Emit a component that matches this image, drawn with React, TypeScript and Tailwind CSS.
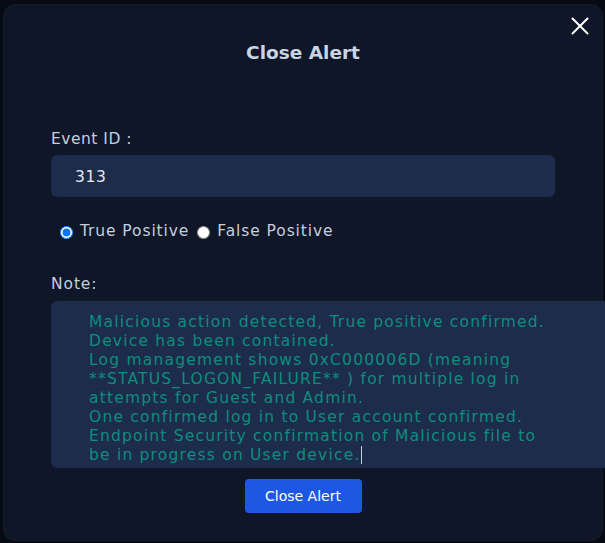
import { X } from 'lucide-react';

const noteLines = [
  'Malicious action detected, True positive confirmed.',
  'Device has been contained.',
  'Log management shows 0xC000006D (meaning',
  '**STATUS_LOGON_FAILURE** ) for multiple log in',
  'attempts for Guest and Admin.',
  'One confirmed log in to User account confirmed.',
  'Endpoint Security confirmation of Malicious file to',
  'be in progress on User device.',
];

const App = () => {
  return (
    <div className="w-[605px] h-[543px] overflow-hidden bg-[#060a13] pt-[4px] pl-[3px] font-['DejaVu_Sans',sans-serif]">
      <div className="relative w-[600px] h-[537px] rounded-[12px] bg-[#0e1627] border border-[#131c2e]">
        {/* close button */}
        <button className="absolute right-[7px] top-[6px] text-white">
          <X className="w-[30px] h-[30px]" strokeWidth={1.6} />
        </button>

        <h2 className="mt-[36px] text-center text-[18.5px] leading-[24px] font-bold text-[#c8d4e2]">Close Alert</h2>

        <div className="px-[47px] mt-[64px]">
          <label className="block text-[15.5px] leading-[20px] tracking-[0.5px] text-[#c3cfdd]">Event ID :</label>
          <div className="mt-[6px] w-[504px] h-[42px] rounded-[6px] bg-[#1c2c4a] flex items-center pl-[24px] pt-[3px] text-[15.5px] tracking-[0.6px] text-[#e2e8f0]">
            313
          </div>

          <div className="mt-[25px] ml-[9px] flex items-center h-[20px] text-[15.5px] tracking-[0.9px] text-[#c3cfdd]">
            <input type="radio" name="verdict" defaultChecked className="w-[13px] h-[13px] m-0" />
            <span className="ml-[7px]">True Positive</span>
            <input type="radio" name="verdict" className="ml-[8px] w-[13px] h-[13px] m-0" />
            <span className="ml-[7px]">False Positive</span>
          </div>

          <label className="block mt-[32px] text-[15.5px] leading-[20px] tracking-[0.9px] text-[#c3cfdd]">Note:</label>
          <div className="mt-[7px] w-[560px] h-[167px] rounded-l-[6px] bg-[#1c2c4a] pl-[38px] pt-[12px] text-[15.5px] leading-[19px] tracking-[1.2px] text-[#0f8c7e] whitespace-pre">
            {noteLines.map((line, i) => (
              <div key={i}>
                {line}
                {i === noteLines.length - 1 && <span className="inline-block w-px h-[18px] bg-[#c3cfdd] align-[-4px]" />}
              </div>
            ))}
          </div>
        </div>

        <div className="mt-[11px] flex justify-center">
          <button className="w-[117px] h-[34px] rounded-[4px] bg-[#1d58e0] text-white text-[14px]">Close Alert</button>
        </div>
      </div>
    </div>
  );
};

export default App;
